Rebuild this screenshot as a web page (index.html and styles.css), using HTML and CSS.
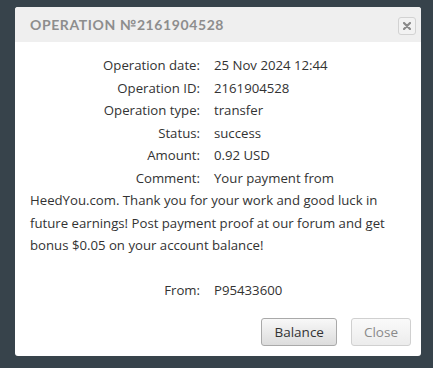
FILE: index.html
```html
<!DOCTYPE html>
<html lang="en">

<head>
  <meta charset="UTF-8">
  <meta name="viewport" content="width=device-width, initial-scale=1.0">
  <title>Operation №2161904528</title>
  <link rel="stylesheet" href="styles.css">
</head>

<body>

  <div class="dialog">
    <div class="dialog-header">
      <span class="dialog-title">Operation №2161904528</span>
      <button class="dialog-close" title="Close">
        <svg width="8" height="8" viewBox="0 0 8 8">
          <path d="M1 1L7 7M7 1L1 7" stroke="#8a8a8a" stroke-width="2.2" stroke-linecap="round" />
        </svg>
      </button>
    </div>

    <div class="dialog-body">
      <div class="row"><span class="label">Operation date:</span>25 Nov 2024 12:44</div>
      <div class="row"><span class="label">Operation ID:</span>2161904528</div>
      <div class="row"><span class="label">Operation type:</span>transfer</div>
      <div class="row"><span class="label">Status:</span>success</div>
      <div class="row"><span class="label">Amount:</span>0.92 USD</div>
      <div class="row"><span class="label">Comment:</span>Your payment from HeedYou.com. Thank you for your work and good luck in future earnings! Post payment proof at our forum and get bonus $0.05 on your account balance!</div>
      <div class="row empty"></div>
      <div class="row"><span class="label">From:</span>P95433600</div>
    </div>

    <div class="dialog-buttons">
      <button class="btn">Balance</button>
      <button class="btn btn-close" disabled>Close</button>
    </div>
  </div>

</body>

</html>
```

FILE: styles.css
```css
body {
  margin: 0;
  padding: 7px 12px 11px 15px;
  background-color: #37434b;
  font-family: "Open Sans", Arial, sans-serif;
}

.dialog {
  background: white;
  border-radius: 3px;
  overflow: hidden;
}

.dialog-header {
  display: flex;
  align-items: center;
  justify-content: space-between;
  height: 35px;
  padding: 0 5px 0 15px;
  background-color: #efefef;
}

.dialog-title {
  font-family: Lato, sans-serif;
  font-size: 14px;
  font-weight: 700;
  letter-spacing: 0.6px;
  text-transform: uppercase;
  color: #8d8d8d;
}

.dialog-close {
  display: flex;
  align-items: center;
  justify-content: center;
  width: 18px;
  height: 18px;
  padding: 0;
  margin-top: 2px;
  border: 1px solid #d2d2d2;
  border-radius: 3px;
  background-color: #f2f2f2;
  cursor: pointer;
}

.dialog-body {
  padding: 12px 15px 0 15px;
  font-size: 13.2px;
  line-height: 22.5px;
  color: #333;
}

.row.empty {
  height: 22.5px;
}

.label {
  display: inline-block;
  width: 170px;
  margin-right: 14px;
  text-align: right;
}

.dialog-buttons {
  display: flex;
  justify-content: flex-end;
  gap: 14px;
  padding: 16px 10px 10px 0;
}

.btn {
  height: 28px;
  padding: 0 12px;
  border: 1px solid #a9a9a9;
  border-radius: 3px;
  background: linear-gradient(#f8f8f8, #dcdcdc);
  color: #333;
  font-family: "Open Sans", Arial, sans-serif;
  font-size: 13.5px;
  cursor: pointer;
}

.btn-close {
  border-color: #d0d0d0;
  background: linear-gradient(#fafafa, #ececec);
  color: #8a8a8a;
  cursor: default;
}
```
